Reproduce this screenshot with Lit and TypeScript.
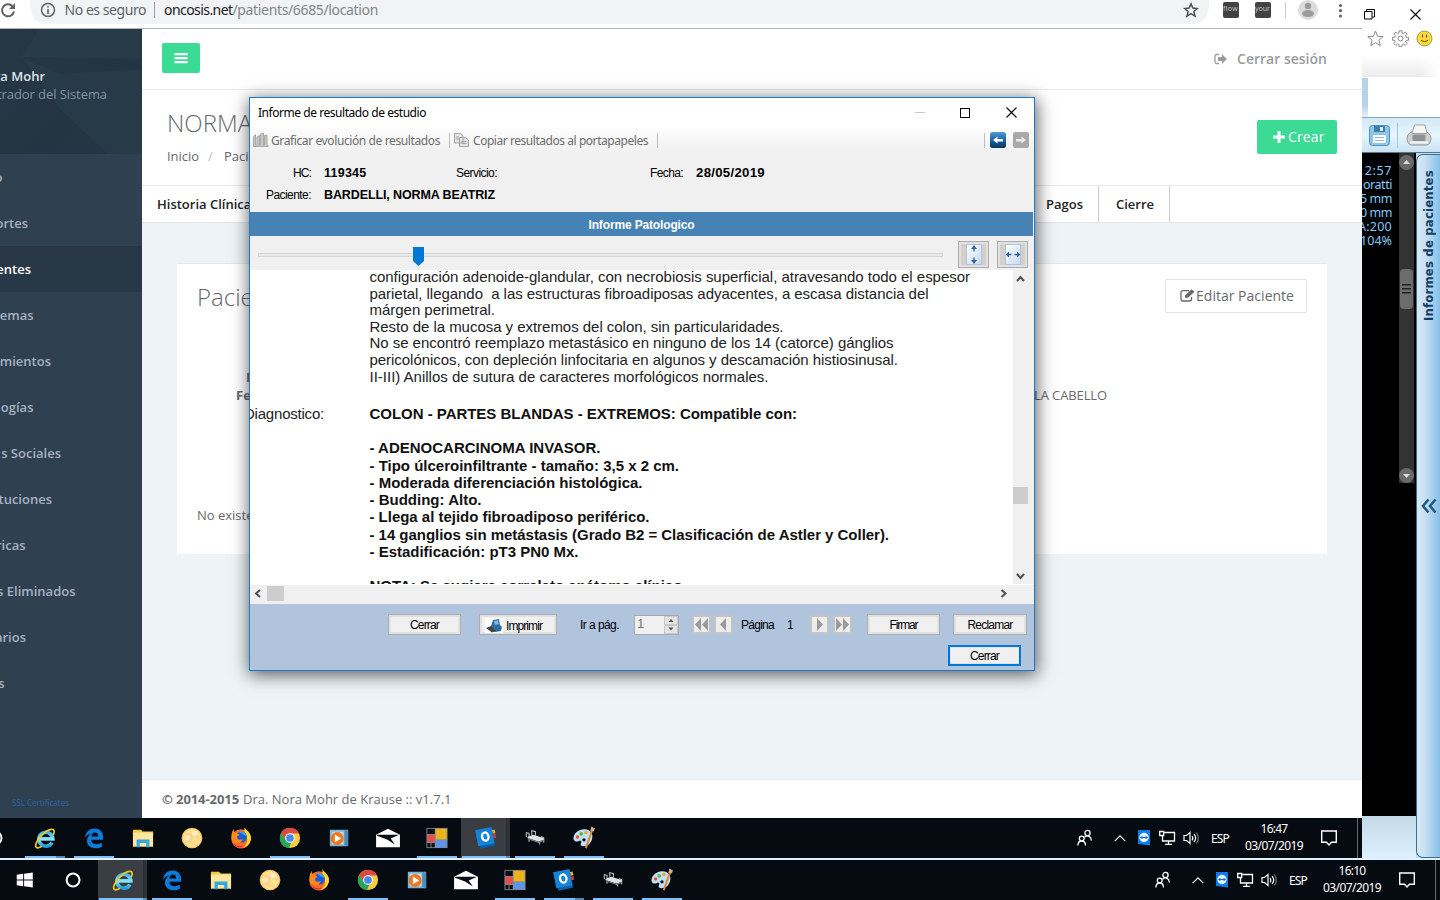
import { LitElement, html, css, svg, nothing } from "lit";
import { customElement, property } from "lit/decorators.js";
import { classMap } from "lit/directives/class-map.js";
import { styleMap } from "lit/directives/style-map.js";

/** A single line of text whose tracking is adjusted so it fills a given width. */
@customElement("fit-text")
class FitText extends LitElement {
  @property() text = "";
  @property({ type: Number }) w = 0;
  static styles = css`
    :host { display: block; flex: none; white-space: pre; }
    span { display: inline-block; white-space: pre; }
  `;
  render() {
    return html`<span>${this.text}</span>`;
  }
  updated() {
    const s = this.renderRoot.querySelector("span") as HTMLElement;
    s.style.letterSpacing = "0px";
    const n = s.getBoundingClientRect().width;
    if (this.w && n) {
      s.style.letterSpacing = (this.w - n) / this.text.length + "px";
      this.style.width = this.w + "px";
    }
  }
}
const ft = (text: string, w: number, cls = "") => html`<fit-text class=${cls} .text=${text} .w=${w}></fit-text>`;

const icons: Record<string, unknown> = {
  start: svg`<path fill="#fff" d="M3 6.300l7-1v6.200H3zM11 5.100L20.500 3.800v7.700H11zM3 12.500h7v6.200l-7-1zM11 12.500h9.500v7.700L11 18.900z"/>`,
  cortana: svg`<circle cx="11" cy="12" r="7" fill="none" stroke="#fff" stroke-width="2.200"/>`,
  ie: svg`<defs><linearGradient id="g" x2="0" y2="1"><stop offset="0" stop-color="#35b5ec"/><stop offset=".5" stop-color="#8be4fb"/><stop offset="1" stop-color="#1d9fe0"/></linearGradient></defs>
    <path fill="none" stroke="url(#g)" stroke-width="4" d="M7 13h13.500A7.600 7.600 0 1 0 19.600 17"/>
    <path fill="none" stroke="#f3c61d" stroke-width="1.900" d="M21 8.500C24 2.500 20 .5 13 5 5 10.500 0 20 2.500 22.300c1.400 1.200 4 0 6-1.300"/>`,
  edge: svg`<path fill="#0b7bdc" d="M2 11.500C3 5 7.500 1.500 12.500 1.500c6.500 0 9.500 4.500 9.500 9.500v2.800H9c.2 3.800 3 5 6 5 2.200 0 4-.6 5.600-1.500v4.200c-2 1.200-4.200 1.700-6.800 1.700C8 23.200 4.300 19.600 4.300 15c0-3.800 2-6.300 5.200-8-4 .3-6 2.200-7.500 4.500zM9.200 10.300h7.300c0-2.600-1-4.300-3.500-4.300s-3.700 2-3.800 4.300z"/>`,
  folder: svg`<path fill="#f2c744" d="M1 3h9l1.500 2H23v4H1z"/><path fill="#ffe69a" d="M1 6h22v15.500H1z"/><path fill="#2fa9e6" d="M5 22v-8.500h14V22h-3.500v-4.500H8.500V22z"/>`,
  ball: svg`<circle cx="12" cy="12" r="11.300" fill="#f6c45c"/><circle cx="12" cy="12" r="10" fill="#ffe08e"/><path d="M5 7l7 2 4-6M12 9l-2 7-7 1M10 16l7 4M12 9l9 3" fill="none" stroke="#fbc795" stroke-width="1.300"/><circle cx="15" cy="7" r="3" fill="#fff4cf" opacity=".8"/><circle cx="7" cy="12" r="2.500" fill="#fff4cf" opacity=".8"/>`,
  firefox: svg`<circle cx="12" cy="13" r="10.500" fill="#ff6a1f"/><path fill="#ffd92e" d="M16 0c0 3 7 5 7 12 0 5-4 9.500-9 10.500 4-3 6-7 4-11-1-3-3-6-2-11.500z"/><circle cx="12.500" cy="11" r="6" fill="#1c5bd8"/><path fill="#35a6f2" d="M9 5c4-1 8 1 9 5l-4-2z"/><path fill="#ff8a1c" d="M1.500 11c0-4 1-6 2.500-9 0 3 1 4 3 4.500 2 .5 3 1.500 3 2.500-2 .5-3 2-2 3.500 1.500 2 4 1.500 6 .5-1 4-6 6-9 4C2.500 15.500 1.500 14 1.500 11z"/><path fill="#e8264a" d="M2.500 16c3 5 9 6 14 4-4 4-11 3-14-4z"/>`,
  chrome: svg`<circle cx="12" cy="12" r="11" fill="#f7cf3c"/><path fill="#dd4b3e" d="M2.200 6.900A11 11 0 0 1 21.900 7.200H12L8 14.500z"/><path fill="#27a35a" d="M2.300 6.700L7.700 14.500l5.800 2L11 23A11 11 0 0 1 2.300 6.700z"/><circle cx="12" cy="12" r="5.300" fill="#fff"/><circle cx="12" cy="12" r="4.200" fill="#4a88f0"/>`,
  media: svg`<path fill="#79b3d6" d="M2 3h20v18H2z"/><path fill="#b9dcef" d="M4 5h13v14H4z"/><path fill="#4d8cb5" d="M18 3l4 1v17l-4-1z"/><circle cx="10" cy="12.500" r="7" fill="#f0761d"/><path fill="#fff" d="M7.500 8.300v8.400l7-4.200z"/>`,
  mail: svg`<path fill="#fff" d="M-1 8.500L12 2 25 8.500V22H-1z"/><path fill="#0a0e15" d="M0 8.500h24L15 12.500l4.500 6.500L11 13.500 0 9.500z"/>`,
  tiles: svg`<path fill="#888" d="M.5 1h23v22H.5z"/><path fill="#0a0e15" d="M1.500 2h8v5.500h-8zM1.500 17.500H5V22H1.500zM6 17.500h3.500V22H6z"/><path fill="#e35050" d="M1.500 8.500h8v8h-8z"/><path fill="#ebb41c" d="M10.500 2h12v11.500h-12z"/><path fill="#5b95ee" d="M10.500 14.500h12V22h-12z"/>`,
  outlook: svg`<g transform="rotate(-11 11 12)"><path fill="#e8b020" d="M19 5h4v4h-4z"/><path fill="#d33c33" d="M19 10h4v4h-4z"/><path fill="#0a5da8" d="M2 3h18v19.500H4z"/><path fill="#1583d8" d="M2 1.500h18v18H2z"/><ellipse cx="11.500" cy="10.500" rx="3.500" ry="4.500" fill="none" stroke="#fff" stroke-width="2.500"/></g>`,
  bed: svg`<path fill="none" stroke="#b9bbbd" stroke-width="1.200" d="M8.500 9V4l4 1.200v4M2.500 6l3 1v6M2.500 6v5M5.500 13.500V16M17 16.500V19M21.500 11.500v5.500M21.500 11.500l-3-.8"/><path fill="#dfe1e2" d="M4 10.500l6-2 11.500 3.500v2L16 16 4 12z"/><path fill="#7c7f81" d="M4 12l12 4 5.500-2v1.300L16 17.500 4 13.300z"/>`,
  paint: svg`<path fill="#bfe0f5" d="M13 2.500c5.500.5 9 4 8 9.500-1 6-5 9-10 9-3 0-3-2-2-4 .8-2-1-2.500-3-1.500S.500 15.500.500 12.500c0-5.500 6-10.500 12.500-10z"/><circle cx="5" cy="11" r="1.900" fill="#e4572e"/><circle cx="9" cy="7.500" r="2" fill="#54b848"/><circle cx="14" cy="6" r="2" fill="#f2a32c"/><circle cx="12" cy="14" r="1.800" fill="#0a0e15"/><path stroke="#dd8a3a" stroke-width="2.200" d="M21 3l-7 20"/><path fill="#d9b183" d="M19 4l1-4.500L24 1.500 22.500 5z"/>`,
  people: svg`<g fill="none" stroke="#fff" stroke-width="1.300"><circle cx="10.500" cy="3" r="2.600"/><circle cx="4.700" cy="8.500" r="2.400"/><path d="M.9 15.500c0-3 1.600-4.500 3.800-4.500s3.800 1.500 3.800 4.500M7.500 7.300C11 4.500 14.300 6.500 14.300 10.500"/></g>`,
  up: svg`<path fill="none" stroke="#fff" stroke-width="1.400" d="M2 11.500L8 5.500l6 6"/>`,
  team: svg`<path fill="#0d7bea" d="M2 0h12v15.500L2 14z"/><circle cx="8" cy="7.500" r="4.700" fill="#eaf5ff"/><path fill="#0d6fd8" d="M3.800 7.500L6.500 5.700v1.200h3V5.700l2.700 1.800-2.700 1.800V8.100h-3v1.200z"/>`,
  net: svg`<path fill="none" stroke="#fff" stroke-width="1.300" d="M5.500 2.500h10v8.500h-12v-5M.7 1.500h4v4h-4zM3.500 5.500v6M9.500 11v3M6 14.300h7"/>`,
  sound: svg`<path fill="none" stroke="#fff" stroke-width="1.200" d="M1 5.500h2.500L7 2.500v11L3.500 10.500H1zM9 6c1 1.300 1 3 0 4.300M11 4.200c2 2.300 2 5.500 0 7.800"/><path fill="none" stroke="#777" stroke-width="1.200" d="M13.300 2.500c2.600 3.500 2.600 7.700 0 11"/>`,
  note: svg`<path fill="none" stroke="#fff" stroke-width="1.400" d="M.7 1h14.600v11.300H10.500L8 15l-2.500-2.700H.7z"/>`,
};
const icon = (n: string, size = 24, vb = "0 0 24 24") =>
  html`<svg width=${size} height=${size} viewBox=${vb} overflow="visible">${icons[n]}</svg>`;

@customElement("task-bar")
class TaskBar extends LitElement {
  @property() time = "";
  @property() active = "";
  static styles = css`
    :host { display: flex; width: 1440px; height: 40px; flex: none; background: #060b12; color: #fff; font: 12px "Noto Sans", sans-serif; }
    .slot { position: relative; width: 49px; height: 40px; display: flex; align-items: center; justify-content: center; }
    .slot svg { width: 22px; height: 22px; }
    .slot.on { background: #3a3e42; }
    .line { position: absolute; bottom: 0; left: 5px; right: 4px; height: 2px; background: #7fc0fa; }
    .on .line { left: 1px; right: 0; }
    .split .line { background: linear-gradient(90deg, #7fc0fa 78%, #5788b4 78%); }
    .on.split { background: linear-gradient(90deg, #3a3e42 91%, #20242a 91%, #2f3338 94%); }
    .on.split .line { background: linear-gradient(90deg, #7fc0fa 91%, #5788b4 91%); }
    .grow { flex: 1; }
    .tray { display: grid; grid-template-columns: 36px 23px 23px 24px 28px 34px 76px 36px 5px; align-items: center; }
    .clock { width: 58px; display: grid; grid-template-rows: 17px 18px; line-height: 17px; justify-items: center; margin-top: -1px; }
    .tray svg { display: block; }
    .edge { height: 40px; border-left: 1px solid #666a6e; box-sizing: border-box; }
  `;
  render() {
    const names = ["start", "cortana", "ie", "edge", "folder", "ball", "firefox", "chrome", "media", "mail", "tiles", "outlook", "bed", "paint"];
    const open = ["ie", "edge", "chrome", "tiles", "outlook", "bed", "paint"];
    return html`
      ${names.map(
        (n) => html`<div class=${classMap({ slot: true, on: n === this.active, split: n === "ie" || n === "outlook" })}>
          ${icon(n)}${open.includes(n) ? html`<i class="line"></i>` : nothing}
        </div>`
      )}
      <div class="grow"></div>
      <div class="tray">
        ${icon("people", 16, "0 0 16 16")} ${icon("up", 14, "0 0 16 16")} ${icon("team", 16, "0 0 16 16")}
        ${icon("net", 16, "0 0 16 16")} ${icon("sound", 16, "0 0 16 16")} ${ft("ESP", 18)}
        <div class="clock">${ft(this.time, 27)} ${ft("03/07/2019", 58)}</div>
        ${icon("note", 16, "0 0 16 16")}
        <div class="edge"></div>
      </div>
    `;
  }
}

@customElement("clinic-page")
class ClinicPage extends LitElement {
  static styles = css`
    :host { display: flex; flex-direction: column; width: 1362px; height: 818px; background: #fff; font-family: "Open Sans", sans-serif; font-size: 13px; color: #676a6c; }
    svg { display: block; flex: none; }
    .bar { height: 28px; flex: none; display: flex; border-bottom: 1px solid #b3b3b3; background: #fff; }
    .reload { width: 30px; padding-top: 2px; box-sizing: border-box; }
    .pill { width: 1179px; height: 24px; background: #f1f3f4; border-radius: 0 0 14px 14px / 0 0 20px 20px; display: grid; grid-template-columns: 10px 24.500px 89.500px 10px 68.500px 1fr 26px; box-sizing: border-box; font: 14px/20px "Noto Sans", sans-serif; color: #5f6368; }
    .pill svg { margin-top: 2px; }
    .vr { width: 1px; height: 16px; margin-top: 2px; background: #9b9ea2; }
    .dark { color: #202124; }
    .path { color: #80868b; }
    .acts { display: grid; grid-template-columns: 32px 30px 13px 38px 1fr; padding-left: 14px; padding-top: 2px; }
    .ext { width: 16px; height: 16px; border-radius: 2px; background: #424242; color: #ccc; font-size: 7px; line-height: 14px; }
    .body { flex: 1; display: flex; min-height: 0; }
    .side { width: 142px; background: #2f4050; display: flex; flex-direction: column; overflow: hidden; color: #a7b1c2; font-weight: 600; }
    .me { height: 125px; background: linear-gradient(135deg, #263846, #233542 60%, #263744); position: relative; box-sizing: border-box; padding-top: 38px; line-height: 18px; }
    .me svg { position: absolute; left: 0; top: 0; }
    .clip { position: relative; display: flex; justify-content: flex-end; overflow: hidden; white-space: nowrap; }
    .name { color: #dfe4ed; }
    .role { color: #8095a8; font-weight: 400; }
    .item { height: 46px; line-height: 46px; flex: none; }
    .item.on { background: #293846; color: #fff; }
    .ssl { margin: 91px 0 0 12px; font: 8px/12px "Noto Sans", sans-serif; color: #2b62a5; }
    .main { flex: 1; background: #edf3f6; display: flex; flex-direction: column; }
    .top { height: 60px; border-bottom: 1px solid #e7e9eb; background: #fff; display: flex; justify-content: space-between; box-sizing: content-box; }
    .burger { margin: 14px 0 0 20px; width: 38px; height: 30px; background: #3bda95; border-radius: 2px; display: flex; align-items: center; justify-content: center; }
    .out { display: grid; grid-template-columns: 23px 125px; align-items: center; color: #999c9e; font-weight: 600; font-size: 14px; margin-top: -1px; }
    .head { height: 95px; border-bottom: 1px solid #e7e9eb; background: #fff; display: flex; justify-content: space-between; }
    h2 { margin: 0; font-weight: 300; font-size: 24px; line-height: 30px; }
    .titles { padding: 18px 0 0 25px; }
    .crumbs { display: grid; grid-template-columns: 41px 16px 40px; margin-top: 9px; line-height: 18px; }
    .slash { color: #bbb; }
    .btn { display: flex; align-items: center; box-sizing: border-box; border-radius: 2px; font-size: 14px; }
    .create { width: 80px; height: 34px; margin: 30px 25px 0 0; background: #3bda95; color: #fff; padding: 0 0 1px 16px; gap: 3px; }
    .tabs { height: 36px; border-bottom: 1px solid #e1e5e8; background: #fff; display: flex; color: #222; font-weight: 600; line-height: 37px; }
    .tab { box-sizing: border-box; border-right: 1px solid #ccc; }
    .t0 { width: 889px; padding-left: 15px; border: 0; }
    .t1 { width: 68px; padding-left: 15px; }
    .t2 { width: 71px; padding-left: 17px; }
    .card { margin: 40px 35px 0; height: 291px; box-sizing: border-box; border-top: 1px solid #e3e8eb; background: #fff; padding: 15px 20px 0; display: flex; flex-direction: column; }
    .ctop { display: flex; justify-content: space-between; height: 34px; }
    .ctop h2 { line-height: 36px; }
    .edit { width: 142px; height: 34px; border: 1px solid #e0e2e4; padding: 0 0 1px 14px; gap: 1px; }
    .rows { margin-top: 55px; line-height: 18px; display: grid; grid-template-columns: 39px 1fr auto; height: 120px; grid-template-rows: 18px 18px 1fr; padding-right: 200px; }
    .rows b { text-align: left; grid-column: 1 / 3; padding-left: 39px; }
    .rows .i { padding-left: 49px; grid-column: 1 / 4; }
    .none { margin-top: 18px; line-height: 18px; }
    .grow { flex: 1; }
    .foot { height: 38px; line-height: 38px; background: #fff; border-top: 1px solid #e7e9eb; padding-left: 20px; display: flex; gap: 4px; }
    .fb { font-weight: 700; }
    b { font-weight: 700; }
  `;
  render() {
    const menu: [string, number][] = [["o", 2.5], ["ortes", 28], ["entes", 31], ["emas", 33.5], ["mientos", 51], ["ogías", 33.5], ["s Sociales", 61], ["ituciones", 52], ["ricas", 25.5], ["s Eliminados", 75.5], ["arios", 26], ["s", 4.5]];
    return html`
      <div class="bar">
        <div class="reload">
          <svg width="16" height="16" viewBox="0 0 16 16"><path fill="none" stroke="#5f6368" stroke-width="2" d="M12.500 4.200A6 6 0 1 0 14 9.500"/><path fill="#5f6368" d="M15 1v6H9z"/></svg>
        </div>
        <div class="pill">
          <i></i>
          <svg width="16" height="16" viewBox="0 0 16 16"><circle cx="8" cy="8" r="6.500" fill="none" stroke="#5f6368" stroke-width="1.500"/><path fill="#5f6368" d="M7.200 4h1.600v1.600H7.200zM7.200 7h1.600v5H7.200z"/></svg>
          ${ft("No es seguro", 81.5)}<i class="vr"></i>${ft("oncosis.net", 68.5, "dark")}${ft("/patients/6685/location", 145.5, "path")}
          <svg width="16" height="16" viewBox="0 0 16 16"><path fill="none" stroke="#4d5156" stroke-width="1.500" d="M8 1.800l1.800 4.300 4.600.4-3.500 3 1.100 4.600L8 11.600 4 14.100l1.100-4.600-3.500-3 4.600-.4z"/></svg>
        </div>
        <div class="acts">
          <div class="ext">${ft("flow", 15)}</div>
          <div class="ext">${ft("your", 15)}</div>
          <svg width="1" height="16"><rect width="1" height="16" fill="#c8cacc"/></svg>
          <svg width="20" height="20" viewBox="0 0 20 20" overflow="visible"><g transform="translate(0 -2)"><circle cx="10" cy="10" r="10" fill="#dcdcdc"/><circle cx="10" cy="6" r="3.200" fill="#9a9a9a"/><ellipse cx="10" cy="13.500" rx="6" ry="3.500" fill="#9a9a9a"/></g></svg>
          <svg width="8" height="18" viewBox="0 0 8 18"><g fill="#5f6368"><circle cx="4.500" cy="3.500" r="1.600"/><circle cx="4.500" cy="8.700" r="1.600"/><circle cx="4.500" cy="14" r="1.600"/></g></svg>
        </div>
      </div>
      <div class="body">
        <div class="side">
          <div class="me">
            <svg width="142" height="125"><path fill="#2a3d4b" opacity=".6" d="M0 20L22 28 39 0H142V40L60 45zM22 28L60 80 108 125H142V30z"/></svg>
            <div class="clip name" style=${styleMap({ width: "45px" })}>ra Mohr</div>
            <div class="clip role" style=${styleMap({ width: "107px" })}>${ft("trador del Sistema", 110)}</div>
          </div>
          ${menu.map(([t, w], i) => html`<div class=${classMap({ item: true, on: i === 2 })}><div class="clip" style=${styleMap({ width: w + "px" })}>${t}</div></div>`)}
          <div class="ssl">${ft("SSL Certificates", 57)}</div>
        </div>
        <div class="main">
          <div class="top">
            <div class="burger"><svg width="14" height="12"><path fill="#fff" d="M.500 1h13v2.200H.500zM.500 5h13v2.200H.500zM.500 9h13v2.200H.500z"/></svg></div>
            <div class="out">
              <svg width="14" height="12" viewBox="0 0 14 12"><path fill="none" stroke="#999c9e" stroke-width="1.300" d="M5 1.500H2.500Q1 1.500 1 3v6q0 1.500 1.500 1.500H5"/><path fill="#999c9e" d="M4 4h4V1.200L13 6l-5 4.800V8H4z"/></svg>
              ${ft("Cerrar sesión", 90)}
            </div>
          </div>
          <div class="head">
            <div class="titles">
              <h2>NORMA</h2>
              <div class="crumbs">${ft("Inicio", 32)}<span class="slash">/</span><span>Pacientes</span></div>
            </div>
            <div class="btn create">
              <svg width="12" height="12"><path fill="#fff" d="M4.500 0h3v4.500H12v3H7.500V12h-3V7.500H0v-3h4.500z"/></svg>
              ${ft("Crear", 36.5)}
            </div>
          </div>
          <div class="tabs">
            <div class="tab t0">Historia Clínica</div>
            <div class="tab t1">${ft("Pagos", 37)}</div>
            <div class="tab t2">${ft("Cierre", 38)}</div>
          </div>
          <div class="card">
            <div class="ctop">
              <h2>Paciente</h2>
              <div class="btn edit">
                <svg width="15" height="13" viewBox="0 0 15 13"><path fill="none" stroke="#676a6c" stroke-width="1.300" d="M9 1.700H3Q1 1.700 1 3.500V10q0 2 2 2h6.500q2 0 2-2V8"/><path fill="#676a6c" d="M5 8.800V6.500L11.500.2l3 2.600-6.500 6z"/></svg>
                ${ft("Editar Paciente", 98)}
              </div>
            </div>
            <div class="rows">
              <b class="i">Nombre</b>
              <b>Fecha</b>
              ${ft("LA CABELLO", 73)}
            </div>
            <div class="none">No existen</div>
          </div>
          <div class="grow"></div>
          <div class="foot">${ft("© 2014-2015", 77, "fb")}${ft("Dra. Nora Mohr de Krause :: v1.7.1", 208.5)}</div>
        </div>
      </div>
    `;
  }
}

@customElement("report-dialog")
class ReportDialog extends LitElement {
  static styles = css`
    :host { display: flex; flex-direction: column; box-sizing: border-box; width: 786px; height: 574px; border: 1px solid #1b79cb; background: #f0f0f0; box-shadow: 1px 3px 16px 1px rgba(0, 0, 0, 0.62); font: 12px "Liberation Sans", sans-serif; color: #000; }
    svg { display: block; flex: none; }
    .title { height: 30px; background: #fff; display: grid; grid-template-columns: 657px 45px 46px 1fr; align-items: center; padding: 0 0 1px 8px; box-sizing: border-box; font-family: "Noto Sans", sans-serif; }
    .tools { height: 25px; background: linear-gradient(#fdfdfd, #f0f0f0); display: grid; grid-template-columns: 18px 178px 5px 19px 184px 327px 6px 23px 16px; padding: 0 0 1px 3px; align-items: center; color: #6d6d6d; font-family: "Noto Sans", sans-serif; box-sizing: border-box; }
    .sep { width: 1px; height: 15px; background: #bdbdbd; }
    .info { height: 59px; box-sizing: border-box; padding-top: 9px; display: grid; grid-template-columns: 61px 13px 132px 41px 153px 33px 13px 80px; grid-template-rows: 22px 22px; line-height: 22px; }
    .info .r { justify-self: end; }
    .b { font-weight: 700; font-size: 12.500px; }
    .d { font-weight: 700; font-size: 13.200px; }
    .band { height: 24px; width: 783px; background: #4682b4; color: #fff; font-weight: 700; display: flex; justify-content: center; line-height: 26px; }
    .zoom { height: 34px; display: grid; grid-template-columns: 700px 39px 31px; padding-left: 8px; align-items: start; }
    .track { position: relative; width: 685px; height: 4px; border: 1px solid #d6d6d6; box-sizing: border-box; margin-top: 17px; background: #e7eaea; }
    .thumb { position: absolute; left: 154px; top: -7px; }
    .fit { margin-top: 5px; width: 31px; height: 27px; box-sizing: border-box; border: 1px solid #adadad; background: #e1e1e1; display: flex; justify-content: center; align-items: center; }
    .fit .in { width: 25px; height: 21px; display: flex; justify-content: center; background: #d4d0c8; }
    .view { height: 314px; display: flex; }
    .doc { width: 763px; height: 314px; background: #fff; overflow: hidden; font-size: 15px; color: #222; display: grid; grid-template-columns: 119.500px 1fr; }
    .left { padding-top: 135px; display: flex; justify-content: flex-end; height: 18px; line-height: 18px; width: 74px; overflow: visible; }
    .p { line-height: 16.500px; margin-top: -0.700px; }
    .p fit-text { height: 16.540px; }
    .q { line-height: 17.300px; font-weight: 700; color: #111; margin-top: 19.700px; }
    .q fit-text { height: 17.300px; }
    .gap { height: 17.200px; }
    .vs { width: 15px; display: flex; flex-direction: column; align-items: center; }
    .vt { width: 15px; height: 17px; background: #cdcdcd; margin: 199px 0 62px; }
    .hs { height: 20px; box-sizing: border-box; border-top: 1px solid #fff; display: grid; grid-template-columns: 17px 729px 20px; align-items: start; }
    .ht { width: 17px; height: 15px; background: #cdcdcd; margin-top: 1px; }
    .bottom { flex: 1; background: #b0c4de; padding-top: 10px; }
    .r1 { height: 21px; padding-left: 138px; display: grid; grid-template-columns: 91px 101px 54px 58px 21.500px 27.500px 46px 23px 23px 34px 86px 74px; align-items: center; }
    .r2 { display: flex; justify-content: flex-end; padding: 10px 13px 0 0; }
    .btn { box-sizing: border-box; height: 21px; border: 1px solid #adadad; box-shadow: inset 0 0 0 2px #e1e1e1; background: #f0f0f0; display: flex; align-items: center; justify-content: center; gap: 3px; width: 73px; }
    .btn.w { width: 78px; justify-content: flex-start; padding: 2px 0 0 5px; }
    .btn.x { width: 74px; }
    .btn.focus { border: 2px solid #0078d7; box-shadow: inset 0 0 0 1px #e1e1e1; }
    .nav { width: 19px; height: 19px; border: 2px solid #c3c3c3; background: #ededed; box-sizing: border-box; display: flex; align-items: center; justify-content: center; }
    .spin { width: 45px; height: 20px; border: 1px solid #a6abb3; box-sizing: border-box; background: #f0f0f0; display: grid; grid-template-columns: 27px 14px; color: #777; padding-left: 2px; line-height: 16px; font-size: 13px; }
  `;
  render() {
    const chev = (d: string) => html`<svg width="15" height="18" viewBox="0 0 15 18"><path d=${d} fill="none" stroke="#505050" stroke-width="2"/></svg>`;
    const body: [string, number][] = [
      ["configuración adenoide-glandular, con necrobiosis superficial, atravesando todo el espesor", 600.5],
      ["parietal, llegando  a las estructuras fibroadiposas adyacentes, a escasa distancia del", 559],
      ["márgen perimetral.", 125.5],
      ["Resto de la mucosa y extremos del colon, sin particularidades.", 414],
      ["No se encontró reemplazo metastásico en ninguno de los 14 (catorce) gánglios", 524],
      ["pericolónicos, con depleción linfocitaria en algunos y descamación histiosinusal.", 528.5],
      ["II-III) Anillos de sutura de caracteres morfológicos normales.", 399],
    ];
    const list: [string, number][] = [
      ["- ADENOCARCINOMA INVASOR.", 231],
      ["- Tipo úlceroinfiltrante - tamaño: 3,5 x 2 cm.", 309.5],
      ["- Moderada diferenciación histológica.", 273],
      ["- Budding: Alto.", 112],
      ["- Llega al tejido fibroadiposo periférico.", 280],
      ["- 14 ganglios sin metástasis (Grado B2 = Clasificación de Astler y Coller).", 519.5],
      ["- Estadificación: pT3 PN0 Mx.", 209],
    ];
    const nav = (d: string) => html`<div class="nav"><svg width="15" height="13" viewBox="0 0 15 13"><path fill="#9a9a9a" d=${d}/></svg></div>`;
    const fit = (rot: number) => html`<div class="fit"><div class="in"><svg width="16" height="21" viewBox="0 0 16 21"><defs><linearGradient id="p" x2="1" y2="1"><stop offset="0" stop-color="#fff"/><stop offset="1" stop-color="#c4daf3"/></linearGradient></defs><rect x=".5" y=".5" width="15" height="20" fill="url(#p)" stroke="#a9c4e6"/>
      ${rot ? svg`<path stroke="#2e6199" fill="none" stroke-width="1.300" d="M1.500 10.500h5M14.500 10.500h-5"/><path fill="#2e6199" d="M4 7.500v6L.8 10.500zM12 7.500v6l3.200-3z"/>` : svg`<path stroke="#2e6199" fill="none" stroke-width="1.300" d="M8 1.500v6M8 19.500v-6"/><path fill="#2e6199" d="M5 5h6L8 1.500zM5 16h6l-3 3.500z"/>`}</svg></div></div>`;
    return html`
      <div class="title">
        ${ft("Informe de resultado de estudio", 168)}
        <svg width="10" height="11"><path fill="#c4c4c4" d="M0 5h10v1H0z"/></svg>
        <svg width="10" height="10"><rect x=".5" y=".5" width="9" height="9" fill="none" stroke="#000"/></svg>
        <svg width="11" height="11"><path stroke="#000" stroke-width="1.100" d="M.5.500l10 10M10.500.500l-10 10"/></svg>
      </div>
      <div class="tools">
        <svg width="16" height="16"><path fill="#c9c9c9" stroke="#9b9b9b" stroke-width=".8" d="M.5 4.500l2-2V13h1.500V5l2.500-1.500V13H7.500V2l3-1v12h1V3.500l2.500-.5v9.500l1 1v1H.5z"/></svg>
        ${ft("Graficar evolución de resultados", 169)}
        <i class="sep"></i>
        <svg width="16" height="16"><path fill="#e3e3e3" stroke="#a5a5a5" d="M.5 1.500h6l2.500 2.500V11H.5zM5.500 5.500h6l3 2.500v6.500h-9z"/><path stroke="#a5a5a5" d="M2 5h3M2 7h3M7.500 9.500h5M7.500 11.500h5"/></svg>
        ${ft("Copiar resultados al portapapeles", 175)}
        <i class="sep"></i><i class="sep"></i>
        <svg width="16" height="16"><defs><linearGradient id="b" x2="0" y2="1"><stop offset="0" stop-color="#4e9ad8"/><stop offset=".6" stop-color="#155a96"/><stop offset="1" stop-color="#0a3660"/></linearGradient></defs><rect width="16" height="16" rx="2.500" fill="url(#b)"/><path fill="#fff" d="M3 8l4.500-3.500V7H13v2.500H7.500v2z"/></svg>
        <svg width="16" height="16"><rect width="16" height="16" rx="2.500" fill="#a9a9a9"/><path fill="#e8e8e8" d="M13 8L8.500 4.500V7H3v2.500h5.500v2z"/></svg>
      </div>
      <div class="info">
        ${ft("HC:", 18, "r")}<i></i>${ft("119345", 42.5, "b")}${ft("Servicio:", 41)}<i></i>${ft("Fecha:", 33)}<i></i>${ft("28/05/2019", 69, "d")}
        ${ft("Paciente:", 45, "r")}<i></i>${ft("BARDELLI, NORMA BEATRIZ", 171, "b")}
      </div>
      <div class="band">${ft("Informe Patologico", 106)}</div>
      <div class="zoom">
        <div class="track"><svg class="thumb" width="11" height="19"><path fill="#0078d7" d="M0 0h11v14l-5.500 5L0 14z"/></svg></div>
        ${fit(0)} ${fit(1)}
      </div>
      <div class="view">
        <div class="doc">
          <div class="left">${ft("Diagnostico:", 80)}</div>
          <div>
            <div class="p">${body.map(([t, w]) => ft(t, w))}</div>
            <div class="q">
              ${ft("COLON - PARTES BLANDAS - EXTREMOS: Compatible con:", 427.5)}
              <div class="gap"></div>
              ${list.map(([t, w]) => ft(t, w))}
              <div class="gap"></div>
              ${ft("NOTA: Se sugiere correlato anátomo clínico.", 317)}
            </div>
          </div>
        </div>
        <div class="vs">${chev("M4 11l3.500-4 3.500 4")}<i class="vt"></i>${chev("M4 8l3.500 4 3.500-4")}</div>
      </div>
      <div class="hs">
        ${chev("M10 5L6 8.500l4 3.500")}<i class="ht"></i>${chev("M5.500 5l4 3.500-4 3.500")}
      </div>
      <div class="bottom">
        <div class="r1">
          <div class="btn">${ft("Cerrar", 29)}</div>
          <div class="btn w"><svg width="18" height="15"><rect width="18" height="15" fill="#fff"/><path fill="#2f6ca6" d="M8 2l6-1 1 6 2 2-1 4-6 1-5-3z"/><path fill="#444" d="M1 10l5-2 5 5-4 1.500z"/><path fill="#85b4dd" d="M9 3l4-.7.7 4L10 7z"/></svg>${ft("Imprimir", 36)}</div>
          ${ft("Ir a pág.", 39)}
          <div class="spin"><span>1</span><svg width="14" height="18"><path fill="#e4e4e4" stroke="#c8c8c8" d="M.5.5h13v8H.500zM.500 9.500h13v8H.500z"/><path fill="#555" d="M4.500 6h5L7 3zM4.500 11.500h5L7 14.500z"/></svg></div>
          ${nav("M7 0v13L1 6.500zM14 0v13L8 6.500z")}
          ${nav("M10 0v13L4 6.500z")}
          ${ft("Página", 33)}${ft("1", 6)}
          ${nav("M5 0v13l6-6.500z")}
          ${nav("M1 0v13l6-6.500zM8 0v13l6-6.500z")}
          <div class="btn">${ft("Firmar", 28)}</div>
          <div class="btn x">${ft("Reclamar", 45)}</div>
        </div>
        <div class="r2"><div class="btn focus">${ft("Cerrar", 29)}</div></div>
      </div>
    `;
  }
}

@customElement("viewer-strip")
class ViewerStrip extends LitElement {
  static styles = css`
    :host { display: flex; flex-direction: column; width: 78px; height: 858px; background: #fff; }
    svg { display: block; flex: none; }
    .win { height: 28px; display: grid; grid-template-columns: 46px 12px; padding-left: 2px; align-items: center; }
    .fav { height: 20px; display: grid; grid-template-columns: 25px 24px 17px; padding-left: 5px; align-items: center; }
    .haze { height: 22px; margin-top: 7px; background: linear-gradient(rgba(255,255,255,1), rgba(255,255,255,0)), linear-gradient(90deg, #ececec 75%, #fff); }
    .page { height: 39px; margin-top: 1px; display: flex; }
    .page i { width: 6px; background: linear-gradient(#b5d3ea 70%, #e8f2f8); }
    .tool { height: 34px; border-bottom: 1px solid #5d7485; border-top: 1px solid #8ba8b8; background: linear-gradient(#d2e9f5, #e8f5fc 50%, #c9e2f2); display: grid; grid-template-columns: 28px 9px 26px; padding-left: 7px; align-items: center; flex: none; }
    .sep { width: 1px; height: 25px; background: #9fc6df; }
    .low { flex: 1; display: flex; background: #bedbe9; }
    .lcol { width: 54px; display: flex; flex-direction: column; }
    .dark { height: 663px; background: #000; display: flex; }
    .facts { width: 37px; overflow: hidden; color: #85c8f8; font: 12.500px/14px "Noto Sans", sans-serif; padding-top: 11px; box-sizing: border-box; padding-right: 7px; display: flex; flex-direction: column; align-items: flex-end; }
    .sb { width: 15px; height: 330px; background: #333; display: flex; flex-direction: column; align-items: center; }
    .base { flex: 1; background: linear-gradient(#c4dae6, #dcf1fd); }
    .tab { width: 24px; margin-top: 1px; box-sizing: border-box; border: 1px solid #3a6d98; border-right: 0; border-radius: 7px 0 0 7px; background: linear-gradient(90deg, #d8eaf6, #c8e0f2 35%, #86c0ea); display: flex; flex-direction: column; align-items: center; padding-top: 14px; color: #123f66; }
    .lab { writing-mode: vertical-rl; transform: rotate(180deg); height: 152px; font: 700 13px/20px "DejaVu Sans", sans-serif; font-stretch: condensed; letter-spacing: 0.180px; white-space: nowrap; width: 20px; }
    .cc { margin-top: 177px; }
  `;
  render() {
    return html`
      <div class="win">
        <svg width="11" height="11"><path fill="none" stroke="#000" d="M.5 2.500h7.500v7.500H.500zM2.500 2V.500h8V8H8.500"/></svg>
        <svg width="11" height="11"><path stroke="#000" stroke-width="1.100" d="M.5.500l10 10M10.500.500l-10 10"/></svg>
      </div>
      <div class="fav">
        <svg width="17" height="17" viewBox="0 0 17 17"><path fill="#fff" stroke="#8a8a8a" d="M8.500 1l2.100 5.300 5.600.3-4.300 3.600 1.400 5.500-4.800-3-4.800 3 1.400-5.500L.8 6.600l5.600-.3z"/></svg>
        <svg width="17" height="17" viewBox="0 0 17 17"><path fill="#fff" stroke="#8a8a8a" stroke-linejoin="round" d="M7 .8h3v2.300l1.500.6 1.700-1.600 2 2-1.600 1.700.6 1.500h2.300v3h-2.300l-.6 1.500 1.600 1.700-2 2-1.700-1.600-1.500.6v2.200H7v-2.200l-1.500-.6-1.700 1.600-2-2 1.600-1.700-.6-1.500H.6v-3h2.200l.6-1.500-1.600-1.700 2-2 1.700 1.600L7 3.100z"/><circle cx="8.500" cy="8.500" r="2.500" fill="#fff" stroke="#8a8a8a"/></svg>
        <svg width="17" height="17" viewBox="0 0 17 17"><circle cx="8.500" cy="8.500" r="7.500" fill="#fbd93b" stroke="#a79651"/><path stroke="#5e4a14" fill="none" d="M6.500 4.500v3M10.500 4.500v3M5 10.300q3.500 3 7 0"/></svg>
      </div>
      <div class="haze"></div>
      <div class="page"><i></i></div>
      <div class="tool">
        <svg width="21" height="21"><rect x=".5" y=".5" width="20" height="20" rx="3" fill="#8fc6e8" stroke="#4c93c1"/><path fill="#3c7fb0" d="M5 1h11v6H5z"/><path fill="#dceefa" d="M11 2h3v4h-3z"/><rect x="4" y="10" width="13" height="8" rx="1" fill="#f7fbfe"/><path fill="#9fb6c4" d="M6 12h9v1H6zM6 15h9v1H6z"/></svg>
        <i class="sep"></i>
        <svg width="26" height="22"><path fill="#cdd0d2" stroke="#94989c" d="M5 8h16q4 2 4 6.500-.5 5.500-4 6.500H5q-3.500-1-4-6.500Q1 10 5 8z"/><path fill="#f6f6f6" stroke="#9fa2a5" d="M6 9.500L8.500 1H19l2 8.500z"/><rect x="6.500" y="10.500" width="13" height="6.500" rx="1" fill="#8e9296"/><path fill="#fff" d="M4 17.500h18v2H4z" opacity=".8"/></svg>
      </div>
      <div class="low">
        <div class="lcol">
          <div class="dark">
            <div class="facts">${ft("12:57", 35)}${ft("oratti", 29)}${ft("5 mm", 32)}${ft("0 mm", 32)}${ft("A:200", 34)}${ft("104%", 32)}</div>
            <div class="sb">
              <svg width="15" height="330"><circle cx="7.500" cy="9.500" r="7.500" fill="#6a6a6a"/><path fill="#ddd" d="M4 11h7L7.500 7z"/><rect x="1" y="116" width="13" height="40" rx="4" fill="#6c6c6c"/><path fill="#222" d="M3 131h9v1.500H3zM3 135h9v1.500H3zM3 139h9v1.500H3z"/><circle cx="7.500" cy="322.500" r="7.500" fill="#6a6a6a"/><path fill="#ddd" d="M4 321h7l-3.500 4z"/></svg>
            </div>
          </div>
          <div class="base"></div>
        </div>
        <div class="tab">
          <div class="lab">Informes de pacientes</div>
          <svg class="cc" width="16" height="16"><path fill="none" stroke="#215a85" stroke-width="2.600" d="M7.500 1.500L2 8l5.500 6.500M14.500 1.500L9 8l5.500 6.500"/></svg>
        </div>
      </div>
    `;
  }
}

@customElement("app-root")
class AppRoot extends LitElement {
  static styles = css`
    :host { display: block; width: 1440px; height: 900px; overflow: hidden; position: relative; background: #000; }
    .up { display: flex; height: 858px; }
    .left { width: 1362px; height: 858px; overflow: hidden; display: flex; flex-direction: column; align-items: flex-end; }
    .line { height: 2px; background: #dff1fd; }
    report-dialog { position: absolute; left: 249px; top: 97px; }
  `;
  render() {
    return html`
      <div class="up">
        <div class="left">
          <clinic-page></clinic-page>
          <task-bar time="16:47" active="outlook"></task-bar>
        </div>
        <viewer-strip></viewer-strip>
      </div>
      <div class="line"></div>
      <task-bar time="16:10" active="ie"></task-bar>
      <report-dialog></report-dialog>
    `;
  }
}
